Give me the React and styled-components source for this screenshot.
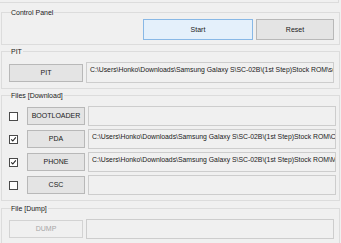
import React from "react";
import styled, { createGlobalStyle } from "styled-components";

const Global = createGlobalStyle`
  html, body { margin: 0; padding: 0; background: #f0f0f0; }
  body { font-family: "Liberation Sans", Arial, sans-serif; }
`;

const Window = styled.div`
  width: 341px;
  height: 243px;
  overflow: hidden;
  background: #f0f0f0;
  display: flex;
  flex-direction: column;
  font-family: "Liberation Sans", Arial, sans-serif;
  font-size: 7px;
  color: #1a1a1a;
`;

const PrevGroupEdge = styled.div`
  box-sizing: border-box;
  width: 339px;
  height: 3px;
  flex: none;
  border-right: 1px solid #dcdcdc;
  border-bottom: 1px solid #dcdcdc;
`;

const Group = styled.fieldset`
  box-sizing: border-box;
  margin: ${(p) => p.$mt}px 0 0 1px;
  width: 339px;
  min-width: 0;
  padding: ${(p) => p.$pt}px 5px ${(p) => p.$pb}px 7px;
  border: 1px solid #dcdcdc;
  flex: none;
`;

const Legend = styled.legend`
  margin-left: 2px;
  padding: 0 1px 0 0;
  font-size: 7px;
  line-height: 9px;
  height: 9px;
  color: #1a1a1a;
`;

const RightBar = styled.div`
  display: flex;
  justify-content: flex-end;
  gap: 3px;
`;

const Button = styled.div`
  box-sizing: border-box;
  width: ${(p) => p.$w}px;
  height: ${(p) => p.$h || 18}px;
  display: flex;
  align-items: center;
  justify-content: center;
  flex: none;
  font-size: 7px;
  line-height: 8px;
  border: 1px solid ${(p) => (p.$primary ? "#88b8e6" : p.$disabled ? "#d3d3d3" : "#b8b8b8")};
  background: ${(p) => (p.$primary ? "#e4f0fb" : p.$disabled ? "#f0f0f0" : "#e4e4e4")};
  color: ${(p) => (p.$disabled ? "#a6a6a6" : "#1a1a1a")};
`;

const Row = styled.div`
  display: flex;
  align-items: center;
  gap: 3px;
  height: ${(p) => p.$h || 20}px;
`;

const Rows = styled.div`
  display: flex;
  flex-direction: column;
  gap: 3px;
`;

const PathBox = styled.div`
  box-sizing: border-box;
  width: 248px;
  height: ${(p) => p.$h || 20}px;
  flex: none;
  border: 1px solid #cdcdcd;
  background: #f0f0f0;
  padding: 3px 0 0 3px;
  font-size: 6.85px;
  line-height: 8px;
  white-space: nowrap;
  overflow: hidden;
  color: #1a1a1a;
`;

const CheckCell = styled.div`
  width: 14px;
  flex: none;
  display: flex;
  align-items: center;
  justify-content: flex-start;
  margin-right: 1px;
`;

const CheckBox = styled.div`
  box-sizing: border-box;
  width: 9px;
  height: 9px;
  border: 1px solid #4a4a4a;
  background: #ffffff;
  display: flex;
  align-items: center;
  justify-content: center;
`;

const Check = ({ on }) => (
  <CheckCell>
    <CheckBox>
      {on && (
        <svg width="7" height="7" viewBox="0 0 7 7">
          <path d="M1.2 3.4 L2.8 5 L5.8 1.4" fill="none" stroke="#222" strokeWidth="1.1" />
        </svg>
      )}
    </CheckBox>
  </CheckCell>
);

const base = "C:\\Users\\Honko\\Downloads\\Samsung Galaxy S\\SC-02B\\(1st Step)Stock ROM\\";

const files = [
  { name: "BOOTLOADER", on: false, path: "" },
  { name: "PDA", on: true, path: base + "CODE_SC02BOMKE1.tar.md5" },
  { name: "PHONE", on: true, path: base + "MODEM_SC02BOMKE1.tar.md5" },
  { name: "CSC", on: false, path: "" },
];

export default function App() {
  return (
    <>
      <Global />
      <Window>
        <PrevGroupEdge />
        <Group $mt={5} $pt={2} $pb={4}>
          <Legend>Control Panel</Legend>
          <RightBar>
            <Button $w={110} $h={21} $primary>Start</Button>
            <Button $w={78} $h={21}>Reset</Button>
          </RightBar>
        </Group>
        <Group $mt={2} $pt={6} $pb={5}>
          <Legend>PIT</Legend>
          <Row $h={21}>
            <Button $w={74}>PIT</Button>
            <PathBox $h={21}>{base + "sc-02b.pit"}</PathBox>
          </Row>
        </Group>
        <Group $mt={2} $pt={6} $pb={5}>
          <Legend>Files [Download]</Legend>
          <Rows>
            {files.map((f) => (
              <Row key={f.name}>
                <Check on={f.on} />
                <Button $w={58}>{f.name}</Button>
                <PathBox>{f.path}</PathBox>
              </Row>
            ))}
          </Rows>
        </Group>
        <Group $mt={3} $pt={6} $pb={15}>
          <Legend>File [Dump]</Legend>
          <Row>
            <Button $w={74} $disabled>DUMP</Button>
            <PathBox />
          </Row>
        </Group>
      </Window>
    </>
  );
}
